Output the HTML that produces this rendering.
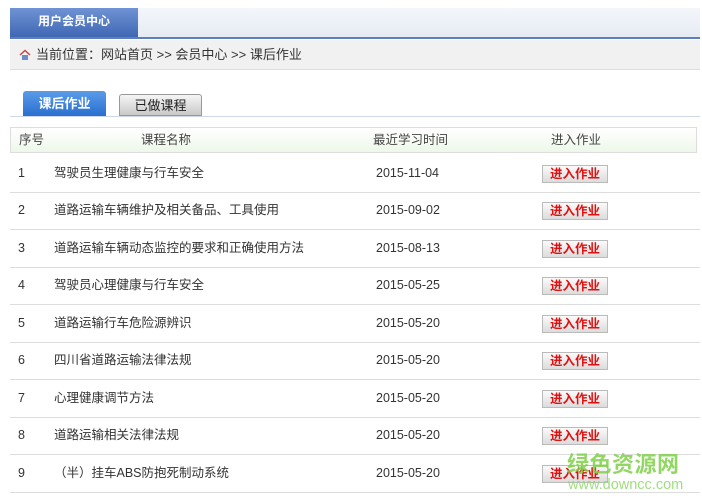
<!DOCTYPE html>
<html><head><meta charset="utf-8"><style>
body{margin:0;background:#fff;width:702px;height:500px;overflow:hidden;font-family:"Liberation Sans","Noto Sans CJK SC",sans-serif;font-size:12px;color:#333;position:relative}
.top{position:absolute;left:10px;top:8px;width:690px;height:29px;background:linear-gradient(#f3f6fb,#e6ebf3);border-bottom:2px solid #5b7fbf}
.top .t{position:absolute;left:0;top:0;width:128px;height:29px;background:linear-gradient(#6f93d4,#3f67b3);color:#fff;font-weight:bold;line-height:27px;padding-left:28px;box-sizing:border-box}
.bc{position:absolute;left:10px;top:40px;width:690px;height:30px;background:#f1f1f1;border-bottom:1px solid #ddd;line-height:30px;font-size:13px;padding-left:26px;box-sizing:border-box}
.home{position:absolute;left:9px;top:9px;width:12px;height:12px}
.tab{position:absolute;top:91px;height:25px;line-height:25px;text-align:center;font-size:13px;border-radius:3px 3px 0 0}
.t1{left:23px;width:83px;background:linear-gradient(#5a9be8,#2a6fd0);color:#fff;font-weight:bold}
.t2{left:119px;width:83px;height:22px;top:94px;line-height:22px;background:linear-gradient(#f5f5f5,#c9c9c9);border:1px solid #999;box-sizing:border-box;color:#222}
.tl{position:absolute;left:10px;top:116px;width:690px;height:1px;background:#cfd8e6}
.th{position:absolute;left:10px;top:127px;width:687px;height:26px;border:1px solid #ddd;background:linear-gradient(#fff,#eef7ea);box-sizing:border-box;font-size:12.5px;color:#444;line-height:24px}
.th span,.r span{position:absolute}
.r{position:absolute;left:10px;width:690px;height:37px;border-bottom:1px solid #ddd;font-size:12.5px;color:#333;line-height:37px}
.btn{position:absolute;left:532px;top:10px;width:66px;height:18px;background:linear-gradient(#fafafa,#dcdcdc);border:1px solid #bbb;box-sizing:border-box;color:#e01010;font-weight:bold;line-height:16px;text-align:center;font-size:12.5px}
.wm{position:absolute;left:567px;top:447px;color:#7fd14a;font-size:22px;font-weight:bold;letter-spacing:0.5px;opacity:.85}
.wm2{position:absolute;left:568px;top:477px;color:#8fd86a;font-size:14.5px;opacity:.85}
</style></head><body>
<div class="top"><div class="t">用户会员中心</div></div>
<div class="bc"><svg class="home" viewBox="0 0 12 12"><path d="M1 6L6 1.5 11 6" fill="none" stroke="#c44" stroke-width="1.5"/><rect x="3" y="6" width="6" height="5" fill="#6a8fc8"/></svg>当前位置：网站首页 &gt;&gt; 会员中心 &gt;&gt; 课后作业</div>
<div class="tab t1">课后作业</div><div class="tab t2">已做课程</div><div class="tl"></div>
<div class="th"><span style="left:8px">序号</span><span style="left:130px">课程名称</span><span style="left:362px">最近学习时间</span><span style="left:540px">进入作业</span></div>
<div class="r" style="top:155px"><span style="left:8px">1</span><span style="left:44px">驾驶员生理健康与行车安全</span><span style="left:366px">2015-11-04</span><div class="btn">进入作业</div></div>
<div class="r" style="top:192px"><span style="left:8px">2</span><span style="left:44px">道路运输车辆维护及相关备品、工具使用</span><span style="left:366px">2015-09-02</span><div class="btn">进入作业</div></div>
<div class="r" style="top:230px"><span style="left:8px">3</span><span style="left:44px">道路运输车辆动态监控的要求和正确使用方法</span><span style="left:366px">2015-08-13</span><div class="btn">进入作业</div></div>
<div class="r" style="top:267px"><span style="left:8px">4</span><span style="left:44px">驾驶员心理健康与行车安全</span><span style="left:366px">2015-05-25</span><div class="btn">进入作业</div></div>
<div class="r" style="top:305px"><span style="left:8px">5</span><span style="left:44px">道路运输行车危险源辨识</span><span style="left:366px">2015-05-20</span><div class="btn">进入作业</div></div>
<div class="r" style="top:342px"><span style="left:8px">6</span><span style="left:44px">四川省道路运输法律法规</span><span style="left:366px">2015-05-20</span><div class="btn">进入作业</div></div>
<div class="r" style="top:380px"><span style="left:8px">7</span><span style="left:44px">心理健康调节方法</span><span style="left:366px">2015-05-20</span><div class="btn">进入作业</div></div>
<div class="r" style="top:417px"><span style="left:8px">8</span><span style="left:44px">道路运输相关法律法规</span><span style="left:366px">2015-05-20</span><div class="btn">进入作业</div></div>
<div class="r" style="top:455px"><span style="left:8px">9</span><span style="left:44px">（半）挂车ABS防抱死制动系统</span><span style="left:366px">2015-05-20</span><div class="btn">进入作业</div></div>
<div class="wm">绿色资源网</div><div class="wm2">www.downcc.com</div>
</body></html>
